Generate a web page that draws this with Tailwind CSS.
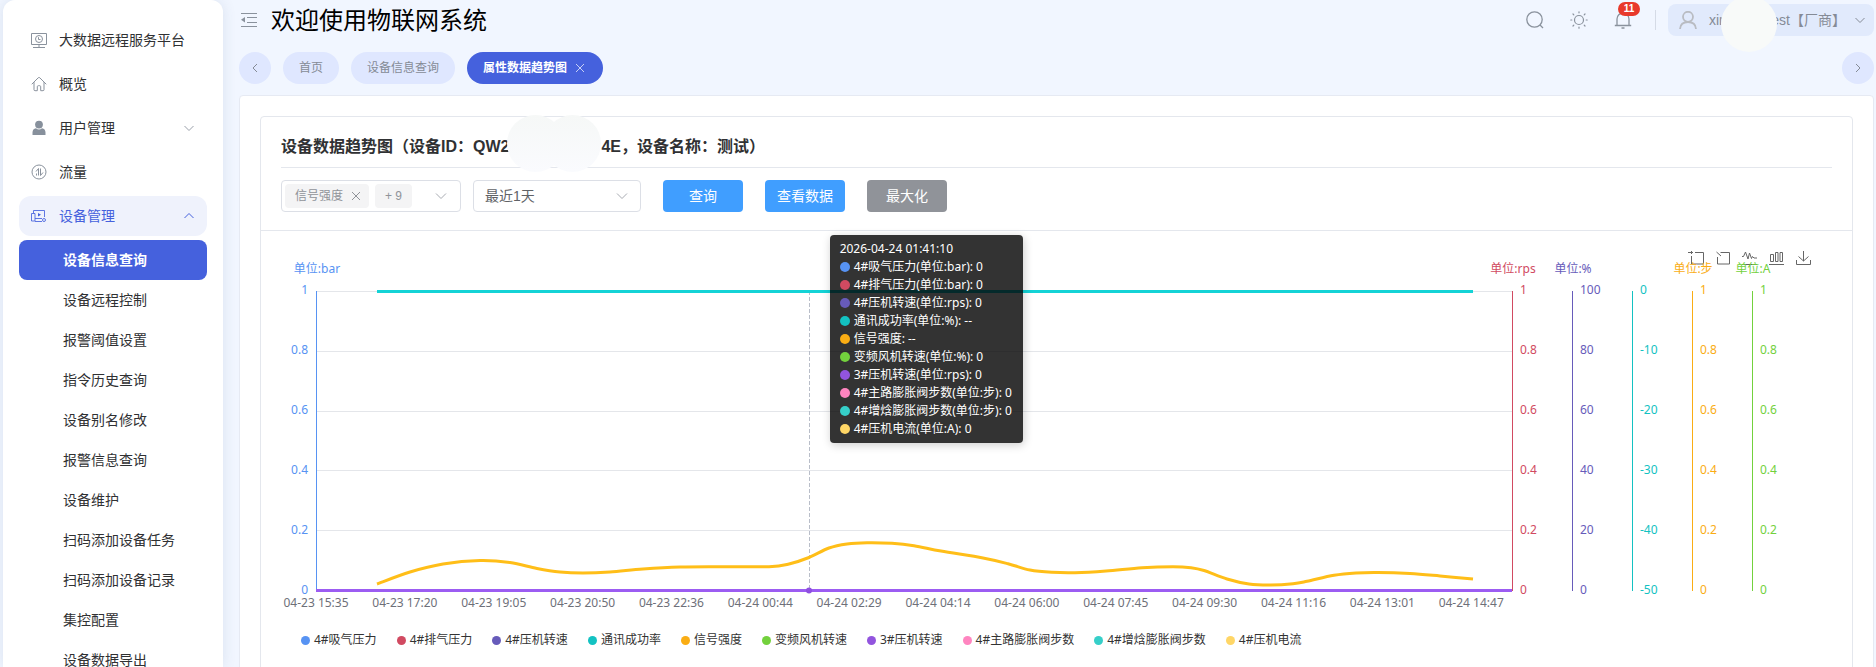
<!DOCTYPE html>
<html lang="zh-CN">
<head>
  <meta charset="UTF-8"/>
  <title>物联网系统</title>
  <meta name="viewport" content="width=device-width,initial-scale=1"/>
  <script src="https://cdn.jsdelivr.net/npm/@tailwindcss/browser@4"></script>
</head>
<body class="flex h-screen overflow-hidden bg-[#f1f6ff] pl-[3px] font-['Liberation_Sans','Noto_Sans_CJK_SC',sans-serif] text-sm text-[#303133]">

  <!-- Sidebar -->
  <aside class="w-[220px] shrink-0 overflow-hidden rounded-t-xl bg-white px-4 pt-5 shadow-[0_0_14px_rgba(60,80,120,0.12)]">
    <nav>
      <div class="flex flex-col gap-1">
        <a href="#" class="flex h-10 items-center gap-3 rounded-xl px-3">
          <svg class="size-4 text-[#8a929d]" viewBox="0 0 16 16" fill="none" stroke="currentColor">
            <path d="M.5 1.5h15v11H.5z M2 15.5h12 M8 13v2"/><circle cx="8" cy="7" r="3.5"/><path d="M7.5 5.2v2.3h2"/>
          </svg>
          大数据远程服务平台
        </a>
        <a href="#" class="flex h-10 items-center gap-3 rounded-xl px-3">
          <svg class="size-4 text-[#8a929d]" viewBox="0 0 16 16" fill="none" stroke="currentColor" stroke-linejoin="round" stroke-linecap="round">
            <path d="M1 8l6.2-6.200a1.100 1.100 0 0 1 1.600 0L15 8 M3 6.500v7.200a1 1 0 0 0 1 1h2.300v-4a1 1 0 0 1 1-1h1.400a1 1 0 0 1 1 1v4H12a1 1 0 0 0 1-1V6.500"/>
          </svg>
          概览
        </a>
        <a href="#" class="flex h-10 items-center gap-3 rounded-xl px-3">
          <svg class="size-4 text-[#87909c]" viewBox="0 0 16 16" fill="currentColor">
            <circle cx="8" cy="4.600" r="3.900"/><path d="M1.500 15v-2.500c0-2.400 1.300-4 3.500-4.300C6 9 7 9.400 8 9.400s2-.4 3-1.200c2.200.3 3.500 1.900 3.500 4.300V15z"/>
          </svg>
          用户管理
          <svg class="ml-auto h-3 w-3 text-[#9aa0aa]" viewBox="0 0 12 12" fill="none" stroke="currentColor"><path d="M1.500 4L6 8.500 10.500 4"/></svg>
        </a>
        <a href="#" class="flex h-10 items-center gap-3 rounded-xl px-3">
          <svg class="size-4 text-[#8a929d]" viewBox="0 0 16 16" fill="none" stroke="currentColor">
            <circle cx="8" cy="8" r="7"/><path d="M7.500 11.500V4.500L5 7.500 M9.500 4.500v7l2.500-3 M5.500 9.500v2"/>
          </svg>
          流量
        </a>
        <a href="#" class="flex h-10 items-center gap-3 rounded-xl bg-[#eff2fc] px-3 text-[#4561dd]">
          <svg class="size-4" viewBox="0 0 16 16" fill="none" stroke="currentColor" stroke-opacity=".85">
            <path d="M2.500 5V2.500h11V9 M.5 5.500h3.500v7.500H.5z M4 10.500h7 M4 13.500h7"/><path d="M7 5l3 1.700-3 1.700z" fill="currentColor" stroke="none"/><circle cx="13" cy="12" r="1.500"/>
          </svg>
          设备管理
          <svg class="ml-auto h-3 w-3" viewBox="0 0 12 12" fill="none" stroke="currentColor"><path d="M1.500 8L6 3.500 10.500 8"/></svg>
        </a>
      </div>
      <div id="subMenu" class="mt-1"></div>
    </nav>
  </aside>

  <div class="flex min-w-0 flex-1 flex-col pr-0.5 pl-4">
    <!-- Header -->
    <header class="flex h-10 shrink-0 items-center">
      <button aria-label="收起菜单" class="mr-3.5 ml-0.5 text-[#8a929d]">
        <svg class="size-4" viewBox="0 0 16 16" fill="none" stroke="currentColor">
          <path d="M0 1.500h16 M6 5.500h10 M6 10.500h10 M0 14.500h16"/><path d="M4 5v5.500L0 7.750z" fill="currentColor" stroke="none"/>
        </svg>
      </button>
      <h1 class="pt-0.5 text-2xl text-black">欢迎使用物联网系统</h1>
      <div class="ml-auto flex items-center text-[#8a929d]">
        <button aria-label="搜索">
          <svg class="size-[18px]" viewBox="0 0 18 18" fill="none" stroke="currentColor" stroke-width="1.300"><circle cx="8.500" cy="8.500" r="7.700"/><path d="M14 14l3 3"/></svg>
        </button>
        <button aria-label="主题" class="ml-[26px]">
          <svg class="size-[18px]" viewBox="0 0 18 18" fill="none" stroke="currentColor" stroke-width="1.200" stroke-linecap="round">
            <circle cx="9" cy="9" r="4.500"/><path d="M9 .8v1 M9 16.200v1 M.8 9h1 M16.200 9h1 M3 3l.8.8 M14.200 14.200l.8.8 M3 15l.8-.8 M14.200 3.800l.8-.8"/>
          </svg>
        </button>
        <button aria-label="通知" class="relative ml-[26px]">
          <svg class="size-[18px]" viewBox="0 0 18 18" fill="none" stroke="currentColor" stroke-width="1.300"><path d="M.8 14.500h16.400 M3 14.500V8a6 6 0 0 1 12 0v6.500 M7.500 17h3"/></svg>
          <span class="absolute -top-[9px] left-1 flex h-3.5 w-[22px] items-center justify-center rounded-full bg-[#e8392b] text-[10px] font-bold text-white">11</span>
        </button>
        <span class="mr-3 ml-[23px] h-5 w-px bg-[#d5dbe6]"></span>
        <button class="relative flex h-8 w-[206px] items-center rounded-lg bg-[#e1eafc] pr-2 pl-[11px] text-[#858b96]">
          <svg class="mr-3 size-[18px] text-[#b9bcc2]" viewBox="0 0 18 18" fill="none" stroke="currentColor" stroke-width="1.800"><circle cx="9" cy="5.800" r="5"/><path d="M1 18c.3-4.500 3.500-7 8-7s7.700 2.500 8 7"/></svg>
          <span>xin</span>
          <span class="ml-auto">est【厂商】</span>
          <svg class="ml-2 h-3 w-3" viewBox="0 0 12 12" fill="none" stroke="currentColor"><path d="M1.500 4L6 8.500 10.500 4"/></svg>
          <span class="absolute -top-2 left-[53px] size-14 rounded-full bg-[#f8faf9]"></span>
        </button>
      </div>
    </header>

    <!-- Page tabs -->
    <div class="mt-3 mb-[11px] flex shrink-0 items-center gap-3 text-xs text-[#858b96]">
      <button aria-label="向左" class="flex size-8 items-center justify-center rounded-full bg-[#dfe7ff]">
        <svg class="h-3 w-3" viewBox="0 0 12 12" fill="none" stroke="currentColor"><path d="M8 2L4 6l4 4"/></svg>
      </button>
      <a href="#" class="flex h-8 items-center rounded-full bg-[#dfe7ff] px-4">首页</a>
      <a href="#" class="flex h-8 items-center rounded-full bg-[#dfe7ff] px-4">设备信息查询</a>
      <a href="#" class="flex h-8 items-center gap-[7px] rounded-full bg-[#4561dd] pr-[17px] pl-4 font-bold text-white">
        属性数据趋势图
        <svg class="h-3 w-3" viewBox="0 0 12 12" fill="none" stroke="currentColor" stroke-opacity=".7"><path d="M2 2l8 8 M10 2l-8 8"/></svg>
      </a>
      <button aria-label="向右" class="ml-auto flex size-8 items-center justify-center rounded-full bg-[#dfe7ff]">
        <svg class="h-3 w-3" viewBox="0 0 12 12" fill="none" stroke="currentColor"><path d="M4 2l4 4-4 4"/></svg>
      </button>
    </div>

    <main class="flex-1 rounded-t border border-[#e6eaf3] bg-white p-5">
      <section class="rounded border border-[#e4e7ed]">
        <!-- Title and filters -->
        <div class="border-b border-[#e4e7ed] px-5 pb-[18px]">
          <h2 class="flex h-[51px] items-center border-b border-[#e4e7ed] pt-2.5 text-base font-bold">
            设备数据趋势图（设备ID：QW2
            <span class="relative h-6 w-[92px]">
              <span class="absolute -top-5 -left-0.5 size-[57px] rounded-full bg-linear-to-b from-[#f6f8f7] to-[#fafbfe]"></span>
              <span class="absolute -top-5 left-[35px] size-[57px] rounded-full bg-linear-to-b from-[#f6f8f7] to-[#fafbfe]"></span>
            </span>
            4E，设备名称：测试）
          </h2>
          <div class="flex items-center pt-3">
            <div role="combobox" aria-label="属性" aria-expanded="false" tabindex="0" class="flex h-8 w-[180px] items-center gap-1.5 rounded border border-[#dcdfe6] pr-3 pl-[3px] text-xs text-[#909399]">
              <span class="flex h-6 items-center rounded bg-[#f4f4f5] pr-1.5 pl-2.5">信号强度
                <button aria-label="移除" class="ml-1.5"><svg class="h-3.5 w-3.5" viewBox="0 0 14 14" fill="none" stroke="currentColor"><path d="M3 3l8 8 M11 3l-8 8"/></svg></button>
              </span>
              <span class="flex h-6 items-center rounded bg-[#f4f4f5] px-2.5">+ 9</span>
              <svg class="ml-auto h-3.5 w-3.5 text-[#a8abb2]" viewBox="0 0 14 14" fill="none" stroke="currentColor"><path d="M2 4.500l5 5 5-5"/></svg>
            </div>
            <div class="relative ml-3">
              <select aria-label="时间范围" class="h-8 w-[168px] appearance-none rounded border border-[#dcdfe6] bg-white px-[11px] text-[#606266]">
                <option>最近1天</option>
              </select>
              <svg class="pointer-events-none absolute top-2 right-3 h-4 w-3.5 text-[#a8abb2]" viewBox="0 0 14 16" fill="none" stroke="currentColor"><path d="M2 5.500l5 5 5-5"/></svg>
            </div>
            <div class="ml-[22px] flex gap-[22px] text-white">
              <button class="h-8 w-20 rounded bg-[#409eff]">查询</button>
              <button class="h-8 w-20 rounded bg-[#409eff]">查看数据</button>
              <button class="h-8 w-20 rounded bg-[#909399]">最大化</button>
            </div>
          </div>
        </div>

        <!-- Chart -->
        <div class="relative px-5 pt-[60px] pb-12 font-['Noto_Sans','Noto_Sans_CJK_SC',sans-serif] text-xs">
          <div class="absolute top-5 right-[41px] flex gap-3 text-[#666]">
            <svg class="h-3.5 w-4" viewBox="0 0 16 14" fill="none" stroke="currentColor"><path d="M0 1.500h5 M3.500 0v3 M7 1.500h8.500v11.500H3.500V5"/></svg>
            <svg class="h-3.5 w-[14px]" viewBox="0 0 14 14" fill="none" stroke="currentColor"><path d="M1.500 6v7h12V1.500H4.500 M.5 1l4.500 4"/></svg>
            <svg class="h-3.5 w-[15px]" viewBox="0 0 15 14" fill="none" stroke="currentColor"><path d="M0 5.500h1.500L3.500 1l2.500 7 1.500-6 2 5.500 1-2 1.500 1.500h3 M0 13.500h15"/></svg>
            <svg class="h-3.5 w-[15px]" viewBox="0 0 15 14" fill="none" stroke="currentColor"><path d="M1.500 3.500h3v7h-3z M6.500 1.500h2.500v9H6.500z M11 1.500h2.500v9H11z M0 13.500h15"/></svg>
            <svg class="h-3.5 w-[15px]" viewBox="0 0 15 14" fill="none" stroke="currentColor"><path d="M.5 9v4.500h14V9 M7.500 0v10 M2.500 5.500l5 4.500 5-4.500"/></svg>
          </div>

          <div class="flex">
            <div class="-mt-[7px] -mb-[5px] flex h-[312px] w-[35px] shrink-0 flex-col justify-between pr-2 text-right leading-3 text-[#5793f3]">
              <span>1</span><span>0.8</span><span>0.6</span><span>0.4</span><span>0.2</span><span>0</span>
            </div>
            <div class="relative h-[300px] flex-1 border-l border-[#5793f3]">
              <span class="absolute -top-[30px] left-0 -translate-x-1/2 leading-4 whitespace-nowrap text-[#5793f3]">单位:bar</span>
              <div class="flex h-full flex-col justify-between">
                <i class="h-px bg-[#e4e6ea]"></i><i class="h-px bg-[#e4e6ea]"></i><i class="h-px bg-[#e4e6ea]"></i><i class="h-px bg-[#e4e6ea]"></i><i class="h-px bg-[#e4e6ea]"></i><i class="h-px bg-[#e4e6ea]"></i>
              </div>
              <svg class="absolute inset-y-0 -left-px h-full w-[calc(100%+1px)] overflow-visible" viewBox="0 0 1196 300" preserveAspectRatio="none" fill="none">
                <path d="M493.500 0V300" stroke="#b9bec9" stroke-dasharray="4 2" vector-effect="non-scaling-stroke"/>
                <path d="M61 .5H1157" stroke="#14d3d6" stroke-width="3" vector-effect="non-scaling-stroke"/>
                <path id="signal" stroke="#ffbe18" stroke-width="3" vector-effect="non-scaling-stroke"/>
                <path d="M0 299.500H1196" stroke="#9c5cf2" stroke-width="3" vector-effect="non-scaling-stroke"/>
                <circle cx="493" cy="299.500" r="3" fill="#8f4fe0"/>
              </svg>
              <div id="tooltip" class="absolute -top-14 z-10 w-[193px] rounded bg-black/80 px-2.5 py-[5px] leading-[18px] whitespace-nowrap text-white shadow-[1px_2px_10px_rgba(0,0,0,0.2)]" style="left:42.9%"></div>
            </div>
            <div id="axes" class="flex w-80 shrink-0"></div>
          </div>

          <div id="timeLabels" class="relative mr-80 ml-[35px] h-6 text-[#6e7079]"></div>
          <ul id="legend" class="mt-[17px] flex gap-5 pl-5 leading-4 text-[#333]"></ul>
        </div>
      </section>
    </main>
  </div>

  <script>
    const subMenu = ['设备信息查询', '设备远程控制', '报警阈值设置', '指令历史查询', '设备别名修改', '报警信息查询',
      '设备维护', '扫码添加设备任务', '扫码添加设备记录', '集控配置', '设备数据导出'];

    // name, unit, value under the pointer, colour
    const series = [
      ['4#吸气压力', 'bar', '0', '#5793f3'],
      ['4#排气压力', 'bar', '0', '#d14a61'],
      ['4#压机转速', 'rps', '0', '#675bba'],
      ['通讯成功率', '%', '--', '#13c2c2'],
      ['信号强度', '', '--', '#faad14'],
      ['变频风机转速', '%', '0', '#73d13d'],
      ['3#压机转速', 'rps', '0', '#9254de'],
      ['4#主路膨胀阀步数', '步', '0', '#ff85c0'],
      ['4#增焓膨胀阀步数', '步', '0', '#36cfc9'],
      ['4#压机电流', 'A', '0', '#ffd666']
    ];

    const unitTicks = ['1', '0.8', '0.6', '0.4', '0.2', '0'];
    const axes = [
      ['单位:rps', '#d14a61', unitTicks],
      ['单位:%', '#675bba', ['100', '80', '60', '40', '20', '0']],
      ['', '#13c2c2', ['0', '-10', '-20', '-30', '-40', '-50']],
      ['单位:步', '#faad14', unitTicks],
      ['单位:A', '#73d13d', unitTicks]
    ];

    const times = ['04-23 15:35', '04-23 17:20', '04-23 19:05', '04-23 20:50', '04-23 22:36', '04-24 00:44', '04-24 02:29',
      '04-24 04:14', '04-24 06:00', '04-24 07:45', '04-24 09:30', '04-24 11:16', '04-24 13:01', '04-24 14:47'];

    const signal = [[61, 293], [94, 281], [127, 273], [164, 269.5], [194, 271.5], [221, 277.5], [244, 281], [267, 282],
      [294, 281], [327, 278], [364, 276], [404, 275.7], [453, 275.7], [473, 273], [493, 266.5], [513, 257], [531, 253],
      [551, 251.7], [576, 252.3], [598, 254.7], [625, 260], [667, 267], [692, 272.7], [714, 279], [736, 281.3],
      [759, 281.7], [790, 280], [826, 276.7], [857, 275.7], [875, 276.7], [888, 279.5], [911, 288], [933, 293],
      [955, 294], [977, 292.7], [991, 290.3], [1018, 284.3], [1040, 282], [1062, 281.5], [1094, 282.6], [1124, 285], [1157, 288]];

    function smoothPath(p) {
      let d = `M${p[0]}`;
      for (let i = 0; i < p.length - 1; i++) {
        const a = p[i - 1] || p[i], b = p[i], c = p[i + 1], e = p[i + 2] || c;
        d += `C${b[0] + (c[0] - a[0]) / 6},${b[1] + (c[1] - a[1]) / 6} ${c[0] - (e[0] - b[0]) / 6},${c[1] - (e[1] - b[1]) / 6} ${c}`;
      }
      return d;
    }

    document.getElementById('subMenu').innerHTML = subMenu.map((t, i) => i === 0
      ? `<a href="#" class="flex h-10 items-center rounded-lg bg-[#4561dd] pl-11 font-bold text-white">${t}</a>`
      : `<a href="#" class="flex h-10 items-center rounded-lg pl-11">${t}</a>`).join('');

    document.getElementById('signal').setAttribute('d', smoothPath(signal));

    document.getElementById('tooltip').innerHTML = '<div>2026-04-24 01:41:10</div>' + series.map(([n, u, v, c]) => `
      <div class="flex items-center gap-1"><i class="size-2.5 rounded-full" style="background:${c}"></i>${n}${u ? `(单位:${u})` : ''}: ${v}</div>`).join('');

    document.getElementById('axes').innerHTML = axes.map(([n, c, ticks]) => `
      <div class="relative h-[300px] w-[60px] border-l" style="color:${c};border-color:${c}">
        <span class="absolute -top-[30px] left-0 -translate-x-1/2 leading-4 whitespace-nowrap">${n}</span>
        <div class="-mt-[7px] flex h-[312px] flex-col justify-between pl-[7px] leading-3">${ticks.map(t => `<span>${t}</span>`).join('')}</div>
      </div>`).join('');

    document.getElementById('timeLabels').innerHTML = times.map((t, i) =>
      `<span class="absolute top-1.5 -translate-x-1/2 leading-3 whitespace-nowrap" style="left:${i * 7.43}%">${t}</span>`).join('');

    document.getElementById('legend').innerHTML = series.map(([n, , , c]) =>
      `<li class="flex items-center gap-1"><i class="size-[9px] rounded-full" style="background:${c}"></i>${n}</li>`).join('');
  </script>
</body>
</html>
